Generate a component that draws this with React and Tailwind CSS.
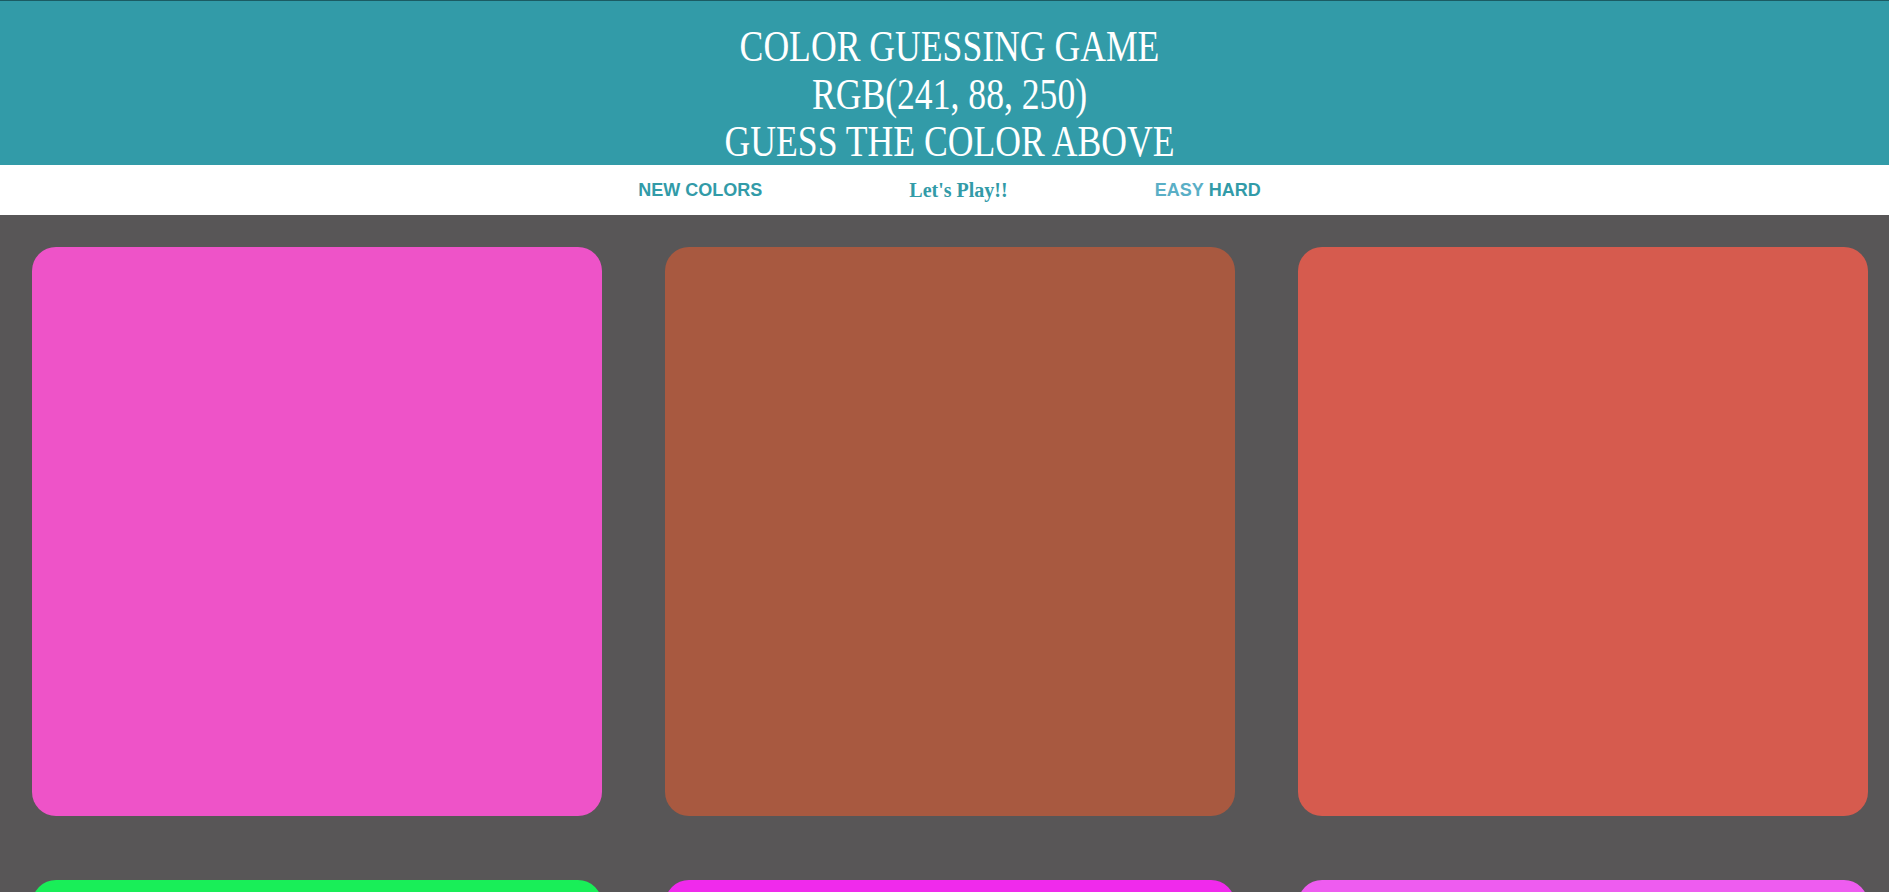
import React from 'react';

const colors = ['#ee53c8', '#a85940', '#d65b4e', '#19ee58', '#f02aec', '#ee5cf0'];

function App() {
  return (
    <div className="min-h-screen bg-[#585657]">
      <header className="bg-[#329ba8] border-t border-[#1b5b63] pt-[22px] text-center text-white font-['Liberation_Serif',serif] text-[44px] leading-[47.5px] h-[165px] pl-[10px] overflow-hidden">
        <div className="scale-x-[0.81]">
          <div>COLOR GUESSING GAME</div>
          <div>RGB(241, 88, 250)</div>
          <div>GUESS THE COLOR ABOVE</div>
        </div>
      </header>

      <nav className="bg-white h-[50px] flex items-center justify-center gap-[147px] pl-[10px]">
        <button className="font-['Liberation_Sans',sans-serif] font-bold text-[18px] text-[#329ba8] uppercase">
          New Colors
        </button>
        <span className="font-['Liberation_Serif',serif] font-bold text-[20px] text-[#329ba8]">
          Let's Play!!
        </span>
        <div className="font-['Liberation_Sans',sans-serif] font-bold text-[18px] flex gap-[5px]">
          <button className="uppercase text-[#5aafc6]">Easy</button>
          <button className="uppercase text-[#329ba8]">Hard</button>
        </div>
      </nav>

      <div className="grid grid-cols-[repeat(3,569.5px)] gap-x-[63.5px] gap-y-[63.5px] pl-[32px] pt-[32px] pb-[32px]">
        {colors.map((c, i) => (
          <div
            key={i}
            className="h-[569px] rounded-[24px]"
            style={{ backgroundColor: c }}
          />
        ))}
      </div>
    </div>
  );
}

export default App;
